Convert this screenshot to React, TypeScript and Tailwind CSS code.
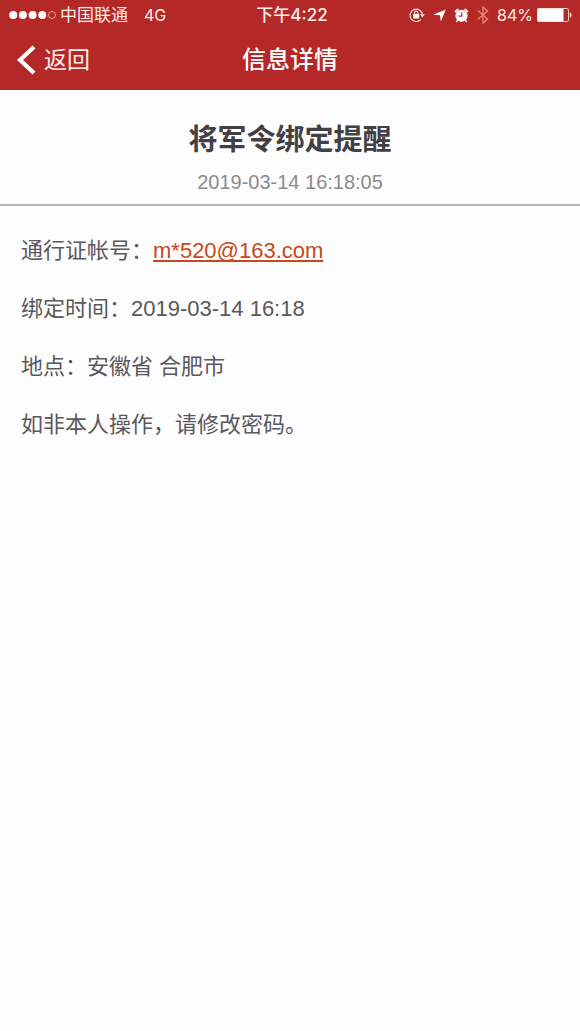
import { ReactNode } from 'react'

function SignalDots() {
  return (
    <svg width="48" height="12" viewBox="0 0 48 12" aria-label="信号强度">
      {[5.2, 14.9, 24.6, 34.3].map((cx) => (
        <circle key={cx} cx={cx} cy="6" r="4" fill="#fff" />
      ))}
      <circle cx="44" cy="6" r="3.5" fill="none" stroke="#f0a090" strokeWidth="1" />
    </svg>
  )
}

function RotationLockIcon() {
  return (
    <svg width="16" height="16" viewBox="0 0 16 16" fill="none" stroke="#fde6e0" strokeWidth="1.1">
      <path d="M11.8 12.6A6.2 6.2 0 1 1 13.4 7.4" />
      <path d="M11 7.2h4.8L13.4 10.4z" fill="#fde6e0" stroke="none" />
      <rect x="4.2" y="7" width="6" height="4.4" rx="0.5" fill="#fff" stroke="none" />
      <path d="M5.5 7.2V5.8a1.7 1.7 0 0 1 3.4 0v1.4" />
    </svg>
  )
}

function LocationIcon() {
  return (
    <svg width="13" height="13" viewBox="0 0 13 13">
      <path d="M12.8 0.4L7.8 12.4 7 6.2 0.2 5.8z" fill="#fff" />
    </svg>
  )
}

function AlarmIcon() {
  return (
    <svg width="15" height="15" viewBox="0 0 15 15" fill="none">
      <circle cx="7.5" cy="7.8" r="6.1" fill="#fff" />
      <path d="M1.6 3.4L3.8 1.6M13.4 3.4L11.2 1.6" stroke="#fff" strokeWidth="2" strokeLinecap="round" />
      <path d="M3.4 12.4L2.6 13.6M11.6 12.4l0.8 1.2" stroke="#fff" strokeWidth="1.4" strokeLinecap="round" />
      <path d="M7.8 4.2v4H4.6" stroke="#b52828" strokeWidth="1.2" />
    </svg>
  )
}

function BluetoothIcon() {
  return (
    <svg width="12" height="18" viewBox="0 0 12 18" fill="none" stroke="#e88a80" strokeWidth="1.3">
      <path d="M1 4.8L10.6 13 6 17V1l4.6 4L1 13.2" />
    </svg>
  )
}

function BatteryIcon() {
  return (
    <svg width="35" height="14" viewBox="0 0 35 14">
      <rect x="0.5" y="0.5" width="31" height="13" rx="1.5" fill="none" stroke="#f6c4ba" />
      <rect x="0.5" y="0.5" width="26" height="13" rx="1" fill="#fff" />
      <path d="M32.8 4.2c2.4 0.8 2.4 4.8 0 5.6z" fill="#fbd8d0" />
    </svg>
  )
}

function StatusBar() {
  return (
    <div className="grid h-[30px] grid-cols-[1fr_auto_1fr] items-center px-2 font-['Inter','Noto_Sans_CJK_SC',sans-serif] text-[17px] leading-[30px] text-[#fdeeea]">
      <div className="flex items-center">
        <SignalDots />
        <span className="ml-1">中国联通</span>
        <span className="ml-4 text-base leading-[30px]">4G</span>
      </div>
      <span className="pl-1 font-medium">下午4:22</span>
      <div className="flex items-center justify-end">
        <RotationLockIcon />
        <span className="ml-2">
          <LocationIcon />
        </span>
        <span className="ml-2">
          <AlarmIcon />
        </span>
        <span className="ml-2">
          <BluetoothIcon />
        </span>
        <span className="ml-2 mr-1 text-base leading-[30px]">84%</span>
        <BatteryIcon />
      </div>
    </div>
  )
}

function NavBar() {
  return (
    <div className="grid h-[60px] grid-cols-[1fr_auto_1fr] items-center px-4">
      <button type="button" className="flex items-center gap-2 text-[23px] leading-8 text-[#fdeeea]">
        <svg width="20" height="30" viewBox="0 0 20 30" fill="none" stroke="#fff" strokeWidth="4.2">
          <path d="M18 2L4 15l14 13" />
        </svg>
        返回
      </button>
      <h1 className="text-2xl leading-8 font-medium text-white">信息详情</h1>
    </div>
  )
}

function Row({ children }: { children: ReactNode }) {
  return <p className="leading-[34px]">{children}</p>
}

export default function App() {
  return (
    <div className="min-h-screen bg-[#fdfdfd] font-['Liberation_Sans','Noto_Sans_CJK_SC',sans-serif]">
      <header className="bg-[#b52828]">
        <StatusBar />
        <NavBar />
      </header>

      <main>
        <div className="border-b-2 border-[#bab2be] pt-[30px] pb-2 text-center">
          <h2 className="text-[29px] leading-10 font-bold text-[#424044]">将军令绑定提醒</h2>
          <time className="mt-2 block text-xl leading-7 text-[#8c8a8e]">2019-03-14 16:18:05</time>
        </div>

        <div className="flex flex-col gap-6 px-[21px] pt-7 text-[22px] text-[#5a585c]">
          <Row>
            通行证帐号：
            <a href="mailto:m*520@163.com" className="text-[#c9481c] underline [text-decoration-skip-ink:none]">
              m*520@163.com
            </a>
          </Row>
          <Row>绑定时间：2019-03-14 16:18</Row>
          <Row>地点：安徽省 合肥市</Row>
          <Row>如非本人操作，请修改密码。</Row>
        </div>
      </main>
    </div>
  )
}
